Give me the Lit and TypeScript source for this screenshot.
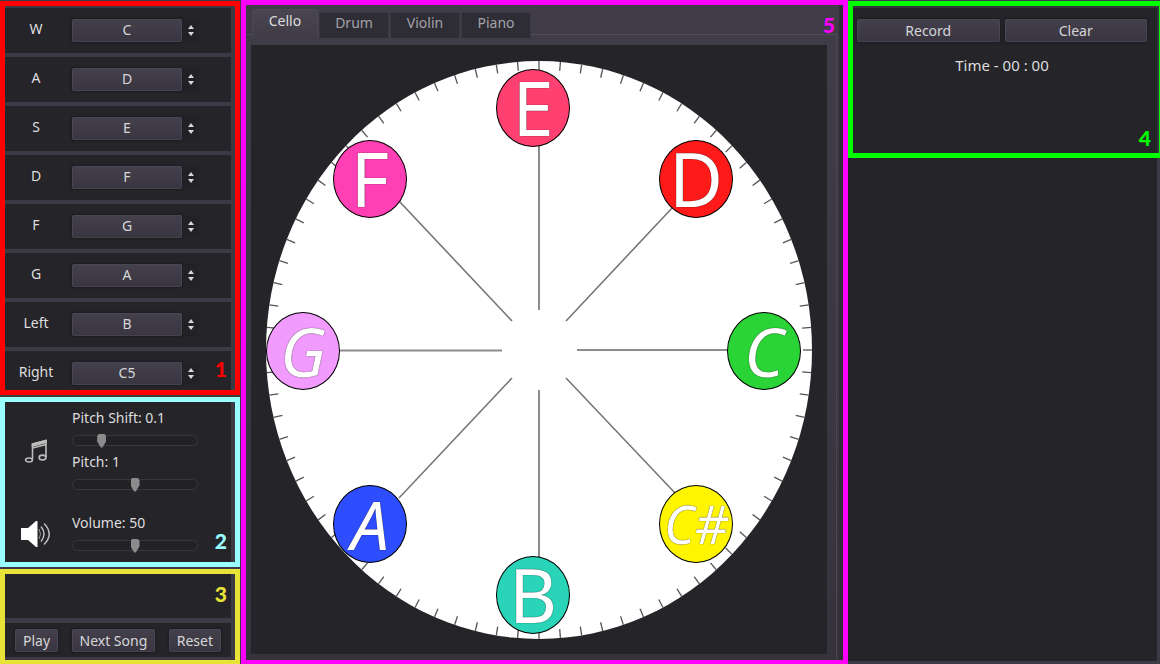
import { LitElement, html, svg, css } from "lit";
import { customElement, state } from "lit/decorators.js";
import { classMap } from "lit/directives/class-map.js";
import { styleMap } from "lit/directives/style-map.js";

const NOTES = ["C", "D", "E", "F", "G", "A", "B", "C5"];
const KEYS = ["W", "A", "S", "D", "F", "G", "Left", "Right"];
const TABS = ["Cello", "Drum", "Violin", "Piano"];

// Centre of each pad on the 576 x 609 stage.
const PADS = [
  { note: "E", x: 282, y: 63, color: "#ff4070", kind: "upright" },
  { note: "D", x: 445, y: 134, color: "#ff1a1a", kind: "upright" },
  { note: "C", x: 513, y: 306, color: "#2ad336", kind: "slanted" },
  { note: "C#", x: 445, y: 479, color: "#fff500", kind: "sharp" },
  { note: "B", x: 282, y: 550, color: "#2ad4b8", kind: "upright" },
  { note: "A", x: 119, y: 479, color: "#2e4dff", kind: "slanted" },
  { note: "G", x: 52, y: 306, color: "#f29bff", kind: "slanted" },
  { note: "F", x: 119, y: 134, color: "#ff40b4", kind: "upright" },
];

const TICKS = Array.from({ length: 80 }, (_, i) => {
  const a = (i * Math.PI) / 40;
  return {
    x1: 288 + 273 * Math.cos(a),
    y1: 305 + 289 * Math.sin(a),
    x2: 288 + 264 * Math.cos(a),
    y2: 305 + 280 * Math.sin(a),
  };
});

@customElement("app-root")
export class AppRoot extends LitElement {
  @state() private tab = "Cello";

  static styles = css`
    :host {
      display: grid;
      grid-template-columns: 241px minmax(0, 1fr) 312px;
      height: 100vh;
      overflow: hidden;
      background: #3d3a45;
      color: #dededf;
      font: 14px/22px "Noto Sans", "Open Sans", sans-serif;
    }
    * {
      box-sizing: border-box;
    }
    .region {
      position: relative;
      border: 5px solid;
    }
    .badge {
      position: absolute;
      font: 900 21px/21px Lato, sans-serif;
      right: 8px;
      bottom: 11px;
    }
    .b1 {
      color: #ff0000;
    }
    .b2 {
      color: #99ffff;
    }
    .b3 {
      color: #e8e337;
      top: 9px;
      bottom: auto;
    }
    .b4 {
      color: #00ff00;
      bottom: 5px;
    }
    .b5 {
      color: #ff00ff;
      top: 9px;
      bottom: auto;
    }
    button,
    select,
    input {
      margin: 0;
      font: inherit;
      color: inherit;
    }
    .btn,
    .note {
      height: 23px;
      padding: 0;
      border: 1px solid #4a4754;
      border-bottom-color: #45424e;
      border-radius: 2px;
      background: linear-gradient(#43404c, #393641);
      box-shadow: 0 0 2px 1px #1d1c20;
      color: #d6d6d8;
      line-height: 20px;
    }

    .left {
      display: flex;
      flex-direction: column;
      gap: 2px;
      padding-right: 1px;
    }
    .keys {
      border-color: #ff0000;
      height: 394px;
      padding: 2px 4px 0 0;
      margin-top: 1px;
      display: grid;
      grid-template-rows: repeat(7, 45px) minmax(0, 1fr);
      gap: 4px;
      flex: none;
    }
    .key {
      display: flex;
      align-items: flex-start;
      padding-top: 11px;
      background: #252429;
    }
    .key label {
      width: 62px;
      margin-right: 5px;
      text-align: center;
      line-height: 20px;
    }
    .note {
      appearance: none;
      width: 110px;
      padding-bottom: 2px;
      text-align: center;
      text-align-last: center;
    }
    .arrows {
      width: 16px;
      height: 23px;
      margin-left: 1px;
      background: #222126;
    }
    .sound {
      border-color: #99ffff;
      background: #252429;
      height: 170px;
      padding-top: 5px;
      display: flex;
      flex-direction: column;
      gap: 17px;
      flex: none;
      box-shadow: inset -4px 0 #3d3a45;
    }
    .group {
      display: grid;
      grid-template-columns: 62px 126px;
      column-gap: 5px;
      align-items: center;
    }
    .group > svg {
      justify-self: center;
    }
    .setting {
      display: flex;
      flex-direction: column;
    }
    .slider {
      appearance: none;
      width: 126px;
      height: 22px;
      background: transparent;
    }
    .slider::-webkit-slider-runnable-track {
      height: 11px;
      border: 1px solid #38363f;
      border-radius: 6px;
      background: #222125;
    }
    .slider::-webkit-slider-thumb {
      appearance: none;
      width: 9px;
      height: 14px;
      margin-top: -2px;
      background: #8b8b8b;
      clip-path: polygon(20% 0, 80% 0, 100% 20%, 100% 55%, 60% 100%, 40% 100%, 0 55%, 0 20%);
    }
    .player {
      border-color: #e8e337;
      border-bottom-width: 4px;
      flex: 1;
      display: flex;
      flex-direction: column;
      gap: 5px;
      padding: 0 4px 3px 0;
    }
    .screen {
      flex: 1;
      background: #252429;
    }
    .transport {
      display: flex;
      justify-content: space-between;
      padding: 6px 10px 5px;
      background: #252429;
    }
    .transport .btn {
      padding: 0 7px;
    }

    .center {
      border-color: #ff00ff;
      border-bottom-width: 4px;
      background: linear-gradient(#403d48, #36333d);
      display: flex;
      flex-direction: column;
      padding: 4px 6px 0 0;
      box-shadow: inset -4px 0 #302e36;
    }
    .tabs {
      display: flex;
      align-items: flex-end;
      gap: 1px;
      height: 29px;
      padding-left: 6px;
      flex: none;
      position: relative;
      z-index: 1;
    }
    .tab {
      width: 70px;
      height: 26px;
      padding: 0 0 6px;
      border: 1px solid #3b3842;
      border-bottom: 0;
      background: #2e2c35;
      color: #a4a3a8;
      line-height: 18px;
    }
    .tab.active {
      width: 66px;
      height: 29px;
      border-color: #4c4956;
      border-radius: 3px 3px 0 0;
      background: linear-gradient(#494652, #3f3c47);
      color: #dededf;
    }
    .frame {
      flex: 1;
      min-height: 0;
      margin-top: -4px;
      padding: 10px 9px 6px 5px;
      border-top: 1px solid #504d5a;
      border-right: 1px solid #4a4753;
    }
    .stage {
      position: relative;
      height: 100%;
      background: #252429;
    }
    .dial {
      display: block;
      width: 100%;
      height: 100%;
    }
    .pad {
      position: absolute;
      width: 74px;
      height: 78px;
      padding: 0;
      border: 1px solid #000;
      border-radius: 50%;
      transform: translate(-50%, -50%);
      color: #fff;
      font: 74px/70px "Noto Sans", sans-serif;
      text-shadow: 0 0 1px #000;
      white-space: nowrap;
    }
    .slanted {
      font-style: italic;
      font-size: 68px;
    }
    .sharp {
      font-style: italic;
      font-size: 52px;
    }

    .right {
      display: flex;
      flex-direction: column;
      padding-bottom: 3px;
      background: #3d3a45;
    }
    .record {
      border-color: #00ff00;
      border-right-width: 1px;
      height: 157px;
      margin-top: 1px;
      padding: 13px 12px 0 4px;
      background: #252429;
      box-shadow: inset -2px 2px #37343f;
      flex: none;
    }
    .actions {
      display: grid;
      grid-template-columns: 1fr 1fr;
      gap: 5px;
    }
    .time {
      margin: 12px 0 0;
      font-size: 15px;
      text-align: center;
    }
    .log {
      flex: 1;
      margin-right: 3px;
      background: #252429;
    }
  `;

  private slider(id: string, text: string, value: number) {
    return html`<div class="setting">
      <label for=${id}>${text}</label>
      <input class="slider" id=${id} type="range" min="0" max="100" .value=${String(value)} />
    </div>`;
  }

  render() {
    return html`
      <div class="left">
        <section class="region keys">
          ${KEYS.map(
            (key, i) => html`<div class="key">
              <label for="key-${i}">${key}</label>
              <select class="note" id="key-${i}">
                ${NOTES.map((n, j) => html`<option ?selected=${i === j}>${n}</option>`)}
              </select>
              <svg class="arrows" viewBox="0 0 16 23">
                <path d="M8 6l3 4H5zM8 17l3-4H5z" fill="#d8d8d8" />
              </svg>
            </div>`
          )}
          <span class="badge b1">1</span>
        </section>

        <section class="region sound">
          <div class="group">
            <svg width="24" height="24" viewBox="0 0 24 24" fill="none" stroke="#bdbdbd" stroke-width="1.6">
              <path d="M8.500 20V5L22 1.500V18M8.500 9L22 5.500" />
              <path d="M8.500 5L22 1.500V3.500L8.500 7z" fill="#bdbdbd" />
              <ellipse cx="5" cy="21" rx="3.400" ry="2" />
              <ellipse cx="18.500" cy="18.500" rx="3.400" ry="2.400" />
            </svg>
            <div>
              ${this.slider("shift", "Pitch Shift: 0.1", 21)}
              ${this.slider("pitch", "Pitch: 1", 50)}
            </div>
          </div>
          <div class="group">
            <svg width="30" height="26" viewBox="0 0 30 26" fill="none">
              <path d="M0 7h7l8-7h1.500v26H15l-8-7H0z" fill="#fff" />
              <path d="M18 8q3 5 0 10" stroke="#999" stroke-width="1" />
              <path d="M20 5.500q6 7.500 0 15M23 2.500q10.500 10.500 0 21" stroke="#bbb" stroke-width="1.500" />
            </svg>
            ${this.slider("volume", "Volume: 50", 50)}
          </div>
          <span class="badge b2">2</span>
        </section>

        <section class="region player">
          <div class="screen"></div>
          <div class="transport">
            <button class="btn">Play</button>
            <button class="btn">Next Song</button>
            <button class="btn">Reset</button>
          </div>
          <span class="badge b3">3</span>
        </section>
      </div>

      <main class="region center">
        <div class="tabs" role="tablist">
          ${TABS.map(
            (t) => html`<button
              role="tab"
              aria-selected=${t === this.tab}
              class=${classMap({ tab: true, active: t === this.tab })}
              @click=${() => (this.tab = t)}
            >${t}</button>`
          )}
        </div>
        <div class="frame">
          <div class="stage">
            <svg class="dial" viewBox="0 0 576 609" preserveAspectRatio="none">
              <ellipse cx="288" cy="305" rx="273" ry="289" fill="#fff" />
              <g stroke="#555" stroke-width="1.300">
                ${TICKS.map((t) => svg`<line x1=${t.x1} y1=${t.y1} x2=${t.x2} y2=${t.y2} />`)}
              </g>
              <g stroke="#777" stroke-width="1.600">
                <path d="M288 100V265M288 345V515M86 305.500H251M326 305H478" stroke="#8c8c8c" stroke-width="2" />
                <path d="M148 156L261 276M422 162L315 276M261 333L148 453M315 333L424 448" />
              </g>
            </svg>
            ${PADS.map(
              (p) => html`<button
                class="pad ${p.kind}"
                style=${styleMap({
                  left: `${(p.x / 576) * 100}%`,
                  top: `${(p.y / 609) * 100}%`,
                  background: p.color,
                })}
              >${p.note}</button>`
            )}
          </div>
        </div>
        <span class="badge b5">5</span>
      </main>

      <aside class="right">
        <section class="region record">
          <div class="actions">
            <button class="btn">Record</button>
            <button class="btn">Clear</button>
          </div>
          <p class="time">Time - 00 : 00</p>
          <span class="badge b4">4</span>
        </section>
        <div class="log"></div>
      </aside>
    `;
  }
}
